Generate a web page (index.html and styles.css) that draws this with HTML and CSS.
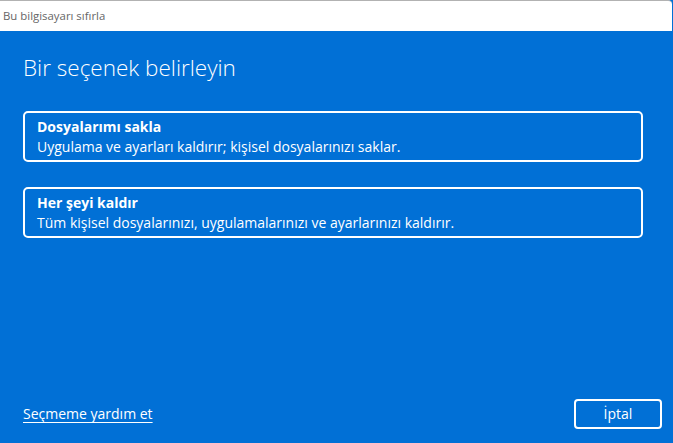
FILE: index.html
```html
<!DOCTYPE html>
<html lang="tr">
<head>
<meta charset="utf-8">
<title>Bu bilgisayarı sıfırla</title>
<link rel="stylesheet" href="styles.css">
</head>
<body>
<div class="window">
  <header class="titlebar">
    <span class="titlebar-text">Bu bilgisayarı sıfırla</span>
  </header>
  <main class="content">
    <h1 class="heading">Bir seçenek belirleyin</h1>
    <div class="options">
      <button class="option" type="button">
        <span class="option-title">Dosyalarımı sakla</span>
        <span class="option-desc">Uygulama ve ayarları kaldırır; kişisel dosyalarınızı saklar.</span>
      </button>
      <button class="option" type="button">
        <span class="option-title">Her şeyi kaldır</span>
        <span class="option-desc">Tüm kişisel dosyalarınızı, uygulamalarınızı ve ayarlarınızı kaldırır.</span>
      </button>
    </div>
  </main>
  <footer class="footer">
    <a class="help-link" href="#">Seçmeme yardım et</a>
    <button class="cancel" type="button">İptal</button>
  </footer>
</div>
</body>
</html>
```
FILE: styles.css
```css
html, body {
  margin: 0;
  padding: 0;
  height: 100%;
}
body {
  font-family: "Open Sans", "Noto Sans", sans-serif;
  background: #0170d6;
  color: #fff;
}
.window {
  height: 100%;
  display: flex;
  flex-direction: column;
}
.titlebar {
  box-sizing: border-box;
  height: 31px;
  background: #fff;
  border-top: 1px solid #b2b2b2;
  border-top-right-radius: 4px;
  display: flex;
  align-items: center;
  padding: 0 0 0 3px;
  margin-right: 1px;
}
.titlebar-text {
  font-size: 11.4px;
  line-height: 16px;
  color: #666;
  margin-top: -1px;
}
.content {
  flex: 1;
  padding: 22px 30px 0 23px;
}
.heading {
  margin: 0;
  font-size: 22.5px;
  font-weight: 300;
  line-height: 30px;
}
.options {
  margin-top: 28px;
  display: flex;
  flex-direction: column;
  gap: 25px;
}
.option {
  display: flex;
  flex-direction: column;
  align-items: flex-start;
  text-align: left;
  background: transparent;
  border: 2px solid #fff;
  border-radius: 5px;
  padding: 4px 12px 3px;
  color: #fff;
  font-family: inherit;
  font-size: 14px;
  line-height: 20px;
  cursor: pointer;
}
.option-title {
  font-weight: 700;
}
.option-desc {
  font-weight: 400;
}
.footer {
  display: flex;
  align-items: center;
  justify-content: space-between;
  padding: 0 11px 14px 23px;
}
.help-link {
  color: #fff;
  font-size: 14px;
  line-height: 20px;
  text-decoration: underline;
  text-decoration-thickness: 1px;
  text-underline-offset: 3px;
}
.cancel {
  box-sizing: border-box;
  width: 88px;
  height: 30px;
  background: transparent;
  border: 2px solid #fff;
  border-radius: 4px;
  color: #fff;
  font-family: inherit;
  font-size: 14px;
  line-height: 20px;
  padding: 0;
  cursor: pointer;
}
```
